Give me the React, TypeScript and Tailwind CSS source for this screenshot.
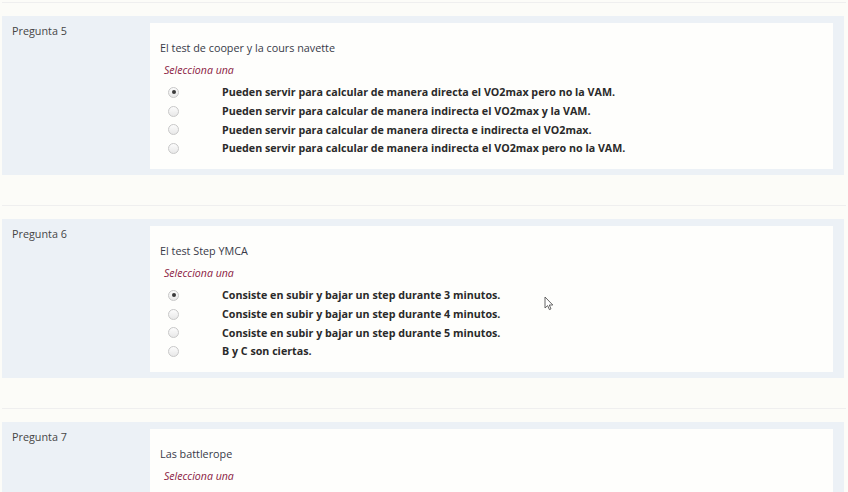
import React from 'react';

type Pregunta = {
  numero: number;
  enunciado: string;
  opciones: string[];
  marcada: number;
};

const preguntas: Pregunta[] = [
  {
    numero: 5,
    enunciado: 'El test de cooper y la cours navette',
    opciones: [
      'Pueden servir para calcular de manera directa el VO2max pero no la VAM.',
      'Pueden servir para calcular de manera indirecta el VO2max y la VAM.',
      'Pueden servir para calcular de manera directa e indirecta el VO2max.',
      'Pueden servir para calcular de manera indirecta el VO2max pero no la VAM.',
    ],
    marcada: 0,
  },
  {
    numero: 6,
    enunciado: 'El test Step YMCA',
    opciones: [
      'Consiste en subir y bajar un step durante 3 minutos.',
      'Consiste en subir y bajar un step durante 4 minutos.',
      'Consiste en subir y bajar un step durante 5 minutos.',
      'B y C son ciertas.',
    ],
    marcada: 0,
  },
  {
    numero: 7,
    enunciado: 'Las battlerope',
    opciones: [],
    marcada: -1,
  },
];

function Radio({ checked }: { checked: boolean }) {
  return (
    <span className="flex h-[11px] w-[11px] items-center justify-center rounded-full border border-[#c8c8c8] bg-gradient-to-b from-[#fcfcfc] to-[#e8e8e8]">
      {checked && <span className="h-[4px] w-[4px] rounded-full bg-[#3a3a3a]" />}
    </span>
  );
}

function Bloque({ p }: { p: Pregunta }) {
  return (
    <div>
      <div className="mx-[2px] border-t border-[#efefef]" />
      <div className="ml-[2px] mr-[4px] mt-[13px] flex h-[159px] bg-[#ecf1f6]">
        <div className="w-[148px] shrink-0 pl-[10px] pt-[6px] text-[10.8px] leading-[18px] text-[#454545]">
          Pregunta {p.numero}
        </div>
        <div className="mb-[6px] mr-[11px] mt-[7px] flex-1 bg-[#fefefc] pl-[10px] pt-[16px]">
          <div className="text-[10.8px] leading-[18px] text-[#383a48]">{p.enunciado}</div>
          <div className="mt-[4px] pl-[4px] text-[10.6px] italic leading-[18px] text-[#8a2042]">
            Selecciona una
          </div>
          <div className="mt-[4px]">
            {p.opciones.map((o, i) => (
              <div key={i} className="flex h-[18.7px] items-center">
                <div className="w-[62px] pl-[8px]">
                  <Radio checked={i === p.marcada} />
                </div>
                <span className="text-[10.7px] font-bold text-[#2a2a2a]">{o}</span>
              </div>
            ))}
          </div>
        </div>
      </div>
      <div className="h-[30px]" />
    </div>
  );
}

export default function App() {
  return (
    <div className="relative h-[492px] overflow-hidden bg-[#fcfcf8] pt-[2px] font-['Open_Sans',sans-serif]">
      {preguntas.map((p) => (
        <Bloque key={p.numero} p={p} />
      ))}
      {/* puntero del ratón */}
      <svg className="absolute left-[544px] top-[296px]" width="10" height="15" viewBox="0 0 10 15">
        <path d="M1 1 L1 12 L3.6 9.6 L5.4 13.6 L7 12.9 L5.3 9 L8.8 9 Z" fill="#fff" stroke="#555" strokeWidth="0.9" strokeLinejoin="round" />
      </svg>
    </div>
  );
}
